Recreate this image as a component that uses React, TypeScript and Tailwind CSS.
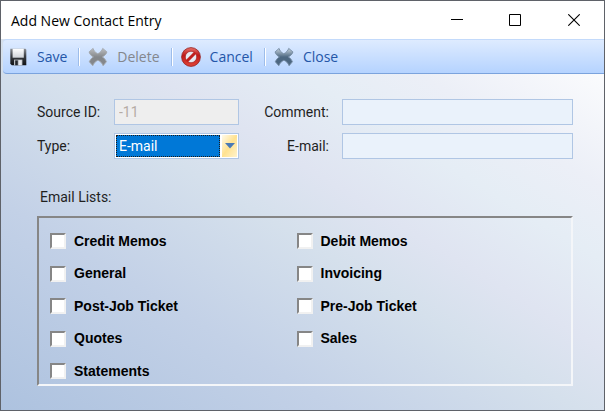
import { useState } from 'react';
import type { ReactNode } from 'react';

const EMAIL_LISTS = [
  'Credit Memos',
  'Debit Memos',
  'General',
  'Invoicing',
  'Post-Job Ticket',
  'Pre-Job Ticket',
  'Quotes',
  'Sales',
  'Statements',
];

function SaveIcon() {
  return (
    <svg viewBox="0 0 18 18" className="h-[18px] w-[18px]" aria-hidden="true">
      <defs>
        <linearGradient id="disk" x1="0" y1="0" x2="0" y2="1">
          <stop offset="0" stopColor="#8b8f94" />
          <stop offset="0.45" stopColor="#3a3d42" />
          <stop offset="1" stopColor="#101214" />
        </linearGradient>
        <linearGradient id="disk-label" x1="0" y1="0" x2="0" y2="1">
          <stop offset="0" stopColor="#ffffff" />
          <stop offset="1" stopColor="#cfd3d8" />
        </linearGradient>
      </defs>
      <path d="M.3.8h15.2l.8 1v15.4H1.8L.3 15.8z" fill="url(#disk)" />
      <path d="M2.6.8h11.2v8.9H2.6z" fill="url(#disk-label)" />
      <path d="M4 11.6h8.4v5.6H4z" fill="#b9bdc2" />
      <path d="M5.2 12.4h2.6v4.8H5.2z" fill="#24272b" />
      <path d="M8.8 12.2h2.8v5H8.8z" fill="#e8eaed" />
    </svg>
  );
}

function CrossIcon({ id, top, bottom, edge }: { id: string; top: string; bottom: string; edge: string }) {
  return (
    <svg viewBox="0 0 20 20" className="h-5 w-5" aria-hidden="true">
      <defs>
        <linearGradient id={id} x1="0" y1="0" x2="0" y2="1">
          <stop offset="0" stopColor={top} />
          <stop offset="0.5" stopColor={bottom} />
          <stop offset="1" stopColor={bottom} />
        </linearGradient>
      </defs>
      <path
        d="M5.1 1.4c.5 2.2 2 4 4.7 5.4 2.6-1.4 4.2-3.200 4.900-5.400l4.200 3.500c-.4 1.900-1.900 3.500-4.500 5 2 1.300 3.300 2.900 4 4.900l-3.300 3.900c-.9-2.400-2.500-4.200-5.200-5.500-2.500 1.300-4.200 3.100-5.100 5.500l-3.500-3.900c.8-2 2.100-3.600 4.100-4.900C2.900 8.500 1.500 6.900 1.100 4.900z"
        fill={`url(#${id})`}
        stroke={edge}
        strokeWidth="0.9"
        strokeLinejoin="round"
      />
    </svg>
  );
}

function CancelIcon() {
  return (
    <svg viewBox="0 0 20 20" className="h-5 w-5" aria-hidden="true">
      <defs>
        <linearGradient id="stop" x1="0" y1="0" x2="0" y2="1">
          <stop offset="0" stopColor="#e8736c" />
          <stop offset="0.4" stopColor="#c01a18" />
          <stop offset="1" stopColor="#e04438" />
        </linearGradient>
      </defs>
      <circle cx="10" cy="10" r="9.4" fill="url(#stop)" stroke="#94211f" strokeWidth="0.8" />
      <circle cx="10" cy="10" r="5.7" fill="#e6eaf2" stroke="#9c1513" strokeWidth="0.6" />
      <path d="M5.800 14.200 14.200 5.800" stroke="#c01f1c" strokeWidth="3" />
    </svg>
  );
}

function ToolButton({ icon, label, disabled }: { icon: ReactNode; label: string; disabled?: boolean }) {
  return (
    <button
      type="button"
      disabled={disabled}
      className="flex items-center gap-[9px] pr-[3px] text-[#2456a8] disabled:text-[#84878d]"
    >
      {icon}
      {label}
    </button>
  );
}

function Separator() {
  return <span className="h-[18px] w-[2px] border-l border-[#9dbdea] bg-white" />;
}

function TitleBar() {
  return (
    <header className="flex h-[38px] items-center bg-white pl-[10px]">
      <h1 className="flex-1 font-['Open_Sans',sans-serif] text-[14px] text-black">Add New Contact Entry</h1>
      <button type="button" aria-label="Minimize" className="flex h-full w-[58px] items-center justify-center">
        <svg viewBox="0 0 12 12" className="h-3 w-3" aria-hidden="true">
          <path d="M0 5.5h12" stroke="#000" />
        </svg>
      </button>
      <button type="button" aria-label="Maximize" className="flex h-full w-[58px] items-center justify-center">
        <svg viewBox="0 0 12 12" className="h-3 w-3" aria-hidden="true">
          <path d="M0.5 0.5h11v11H.5z" fill="none" stroke="#000" />
        </svg>
      </button>
      <button type="button" aria-label="Close window" className="flex h-full w-[60px] items-center justify-center">
        <svg viewBox="0 0 12 12" className="h-3 w-3" aria-hidden="true">
          <path d="M0.3.3l11.4 11.4M11.7.3.3 11.7" stroke="#000" strokeWidth="1.1" />
        </svg>
      </button>
    </header>
  );
}

function Toolbar() {
  return (
    <div
      role="toolbar"
      className="ml-[2px] flex h-[35px] items-center gap-2 rounded-l border-t border-b border-t-[#c3dafb] border-b-[#7ba3dd] bg-linear-to-b from-[#deebff] to-[#b5d3ff] pl-[7px] font-['Open_Sans',sans-serif] text-[14px]"
    >
      <ToolButton icon={<SaveIcon />} label="Save" />
      <Separator />
      <ToolButton icon={<CrossIcon id="del" top="#bcbec1" bottom="#84878b" edge="#a3a7ac" />} label="Delete" disabled />
      <Separator />
      <ToolButton icon={<CancelIcon />} label="Cancel" />
      <Separator />
      <ToolButton icon={<CrossIcon id="cls" top="#c9d5df" bottom="#4c6781" edge="#7389a0" />} label="Close" />
    </div>
  );
}

function ContactFields() {
  const [type, setType] = useState('E-mail');

  return (
    <div className="grid grid-cols-[77px_125px_90px_1fr] items-center gap-y-2">
      <label htmlFor="source-id">Source ID:</label>
      <input
        id="source-id"
        disabled
        defaultValue="-11"
        className="h-[26px] w-full border border-[#b0c6e4] bg-[#eeeeee] px-1 text-[#b5aca4]"
      />
      <label htmlFor="comment" className="text-right">Comment:</label>
      <div className="pl-[13px]">
        <input id="comment" className="h-[26px] w-full border border-[#b0c6e4] bg-[#eaf2fb] px-1" />
      </div>

      <label htmlFor="type">Type:</label>
      <div className="relative flex h-[26px] border border-[#b0c6e4] bg-white p-px">
        <div className="flex-1 border border-dotted border-[#ff8728] bg-[#0078d7] outline outline-dotted outline-[#1b1b1b] -outline-offset-1" />
        <div className="ml-[2px] flex w-[15px] items-center justify-center bg-linear-to-br from-[#fffaea] via-[#ffe290] to-[#fff3cc]">
          <svg viewBox="0 0 10 6" className="h-[6px] w-[10px]" aria-hidden="true">
            <path d="M0 0h10L5 5.500z" fill="#4a7ab5" />
          </svg>
        </div>
        <select
          id="type"
          value={type}
          onChange={(e) => setType(e.target.value)}
          className="absolute inset-0 w-full appearance-none bg-transparent pl-1 text-white outline-none"
        >
          <option className="text-black">E-mail</option>
          <option className="text-black">Phone</option>
        </select>
      </div>
      <label htmlFor="email" className="text-right">E-mail:</label>
      <div className="pl-[13px]">
        <input id="email" className="h-[26px] w-full border border-[#b0c6e4] bg-[#eaf2fb] px-1" />
      </div>
    </div>
  );
}

function EmailLists() {
  return (
    <fieldset className="mt-7">
      <legend className="px-[3px] leading-5">Email Lists:</legend>
      <div className="mt-[9px] grid h-[170px] grid-cols-2 content-between border-2 border-t-[#868686] border-r-[#f4f6f9] border-b-[#f4f6f9] border-l-[#868686] pt-[13px] pr-7 pb-[3px] pl-[11px] font-['Liberation_Sans',sans-serif] text-[14px] font-bold text-black">
        {EMAIL_LISTS.map((name) => (
          <label key={name} className="flex h-5 items-center gap-2">
            <input
              type="checkbox"
              className="h-4 w-4 appearance-none border-2 border-t-[#868686] border-r-[#f1f1f1] border-b-[#f1f1f1] border-l-[#868686] bg-white checked:bg-[#0078d7]"
            />
            {name}
          </label>
        ))}
      </div>
    </fieldset>
  );
}

export default function App() {
  return (
    <div className="flex min-h-screen flex-col border border-[#5f6269] bg-white">
      <TitleBar />
      <main className="flex flex-1 flex-col bg-[linear-gradient(to_top_right,#adc2df_0%,#c3d1e7_28%,#d5e0ec_48%,#dfe4f1_58%,#e5edf5_70%,#eceff7_80%,#ffffff_100%)]">
        <Toolbar />
        <form className="pt-[25px] pr-[31px] pb-6 pl-9 font-['Roboto',sans-serif] text-[14px] text-[#1f1f1f]">
          <ContactFields />
          <EmailLists />
        </form>
      </main>
    </div>
  );
}
